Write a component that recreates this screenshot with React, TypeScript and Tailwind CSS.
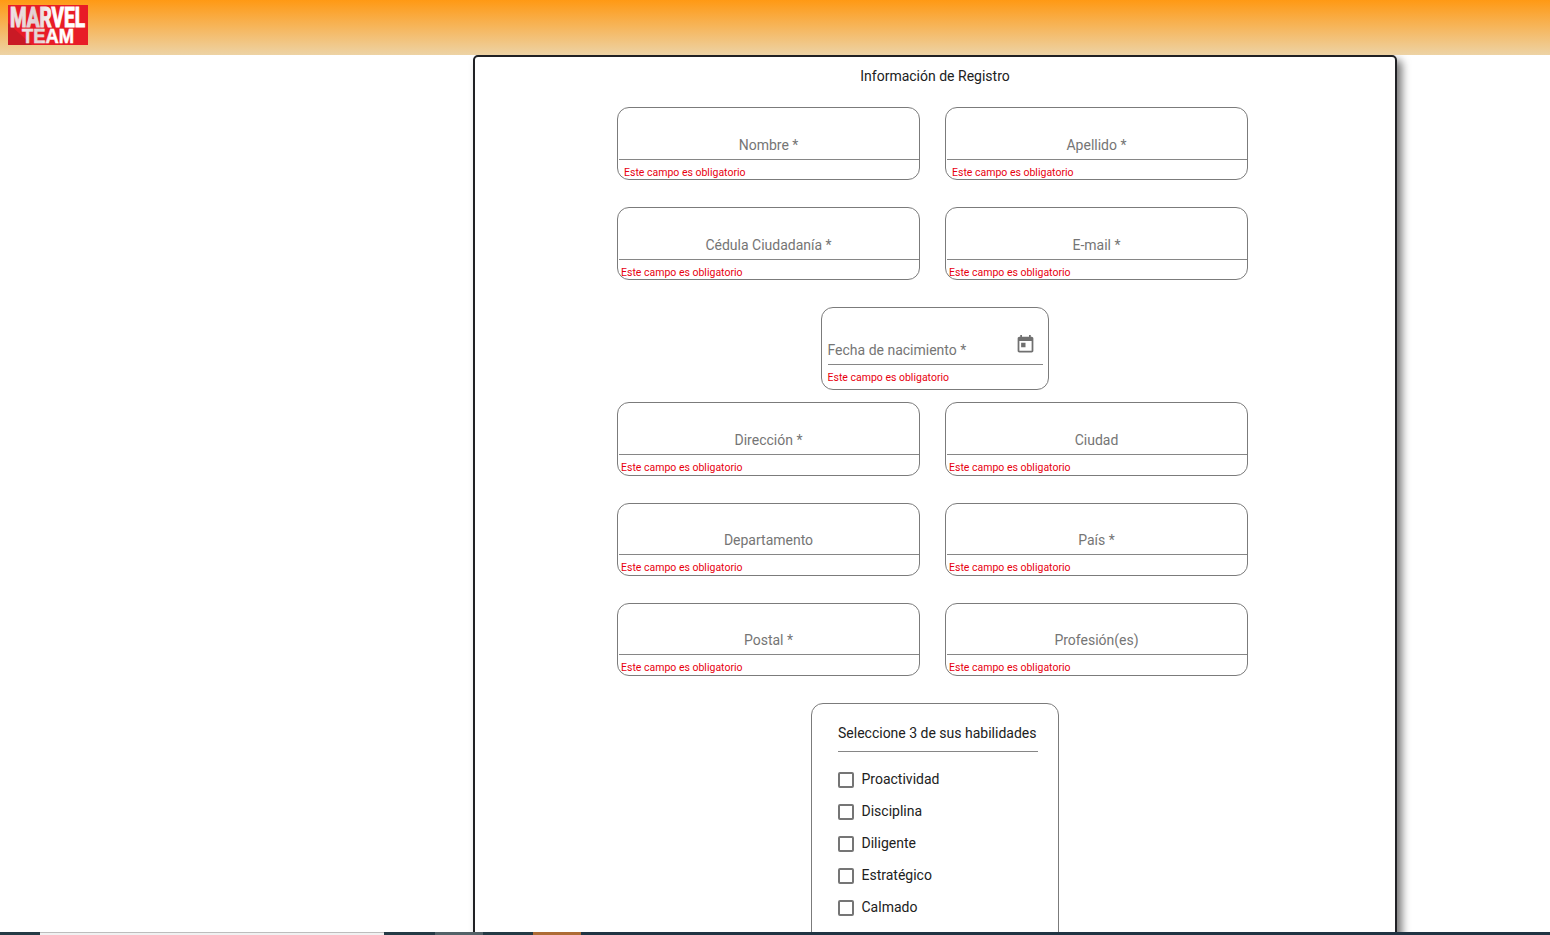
import React from "react";

type FieldSize = "regular" | "tall" | "low";
type FieldProps = { label: string; inset?: boolean; size?: FieldSize };

const ERROR = "Este campo es obligatorio";

const BOX: Record<FieldSize, string> = { regular: "h-[73px]", tall: "h-[74px]", low: "h-[73px]" };
const LINE: Record<FieldSize, string> = { regular: "h-[52px]", tall: "h-[52px]", low: "h-[51px]" };

function Field({ label, inset, size = "regular" }: FieldProps) {
  return (
    <div className={`flex w-[303px] flex-col rounded-[12px] border border-[#7b7b7b] pl-px ${BOX[size]}`}>
      <div className={`flex shrink-0 items-end justify-center border-b border-[#868686] pr-px pb-[6px] ${LINE[size]}`}>
        <span className="text-[14px] leading-4 text-[#757575]">{label}</span>
      </div>
      <div className={`shrink-0 pt-[6px] text-[10.5px] leading-[14px] text-[#e8000f] ${inset ? "pl-[5px]" : "pl-[2px]"}`}>{ERROR}</div>
    </div>
  );
}

function Row({ left, right, inset, size }: { left: string; right: string; inset?: boolean; size?: FieldSize }) {
  return (
    <div className="ml-[142px] flex gap-[25px]">
      <Field label={left} inset={inset} size={size} />
      <Field label={right} inset={inset} size={size} />
    </div>
  );
}

function Logo() {
  return (
    <svg width="80" height="40" viewBox="0 0 80 40" className="block overflow-visible">
      <defs>
        <linearGradient id="logoInk" x1="0" x2="1" y1="0" y2="0">
          <stop offset="0" stopColor="#eee4e5" />
          <stop offset="0.35" stopColor="#e2d0d2" />
          <stop offset="0.6" stopColor="#ffffff" />
        </linearGradient>
      </defs>
      <rect width="80" height="40" fill="#e81c27" />
      <path d="M0 18 L24 40 H0Z" fill="#c91a25" />
      <g fill="url(#logoInk)" stroke="url(#logoInk)" fontWeight="700">
        <text x="2" y="21.7" fontSize="27" strokeWidth="1.1" textLength="75" lengthAdjust="spacingAndGlyphs" fontFamily="Roboto, sans-serif">MARVEL</text>
        <text x="14" y="37.5" fontSize="20" strokeWidth="0.5" textLength="52" lengthAdjust="spacingAndGlyphs" fontFamily="'Liberation Sans', sans-serif">TEAM</text>
      </g>
    </svg>
  );
}

const SKILLS = ["Proactividad", "Disciplina", "Diligente", "Estratégico", "Calmado"];

export default function App() {
  return (
    <div className="flex h-[935px] w-full flex-col overflow-hidden bg-white font-['Roboto',sans-serif]">
      <header className="h-[55px] shrink-0 bg-[linear-gradient(#ff9914,#edd3a5)] pt-[5px] pl-2">
        <Logo />
      </header>

      <main className="h-[877px] shrink-0 overflow-hidden">
        <section className="ml-[473px] flex h-[1100px] w-[924px] flex-col rounded-[5px] border-2 border-[#202124] shadow-[5px_5px_8px_rgba(0,0,0,0.53)]">
          <h1 className="mt-[11px] mb-[31px] h-2 text-center text-[14px] leading-4 font-normal text-[#212121]">
            Información de Registro
          </h1>

          <div className="flex flex-col gap-[27px]">
            <Row left="Nombre *" right="Apellido *" inset />
            <Row left="Cédula Ciudadanía *" right="E-mail *" />
          </div>

          <div className="mt-[27px] mb-[12px] ml-[346px] h-[83px] w-[228px] rounded-[12px] border border-[#7b7b7b] pr-[5px] pl-[5.5px]">
            <div className="flex h-[57px] items-end justify-between border-b border-[#868686]">
              <span className="pb-[6px] text-[14px] leading-4 text-[#757575]">Fecha de nacimiento *</span>
              <svg viewBox="0 0 24 24" className="mr-[7px] mb-[9px] size-[21px] shrink-0" fill="#707070">
                <path d="M19 3h-1V1h-2v2H8V1H6v2H5c-1.11 0-1.99.9-1.99 2L3 19c0 1.1.89 2 2 2h14c1.1 0 2-.9 2-2V5c0-1.1-.9-2-2-2zm0 16H5V8h14v11zM7 10h5v5H7z" />
              </svg>
            </div>
            <div className="pt-[6px] text-[10.5px] leading-[14px] text-[#e8000f]">{ERROR}</div>
          </div>

          <div className="flex flex-col gap-[27px]">
            <Row left="Dirección *" right="Ciudad" size="tall" />
            <Row left="Departamento" right="País *" size="low" />
            <Row left="Postal *" right="Profesión(es)" size="low" />
          </div>

          <div className="mt-[27px] ml-[336px] h-[300px] w-[248px] rounded-t-[12px] border border-[#7b7b7b] px-[26px]">
            <h2 className="h-[48px] w-[200px] border-b border-[#868686] pt-[21px] text-[14px] leading-4 font-normal whitespace-nowrap text-[#212121]">
              Seleccione 3 de sus habilidades
            </h2>
            <ul className="pt-[11px]">
              {SKILLS.map((skill) => (
                <li key={skill} className="flex h-8 items-center gap-[7.5px]">
                  <span className="mt-px size-4 rounded-[2px] border-2 border-[#757575]" />
                  <span className="text-[14px] leading-4 text-[#212121]">{skill}</span>
                </li>
              ))}
            </ul>
          </div>
        </section>
      </main>

      <footer className="flex h-[3px] shrink-0 bg-[#203443]">
        <div className="w-[40px] bg-[#243a45]" />
        <div className="w-[344px] border-t border-[#bdbdbd] bg-[#f1f1f1]" />
        <div className="w-[51px] bg-[#243a45]" />
        <div className="w-[48px] bg-[#536268]" />
        <div className="w-[50px] bg-[#243a45]" />
        <div className="w-[48px] bg-[#ae6b34]" />
      </footer>
    </div>
  );
}
